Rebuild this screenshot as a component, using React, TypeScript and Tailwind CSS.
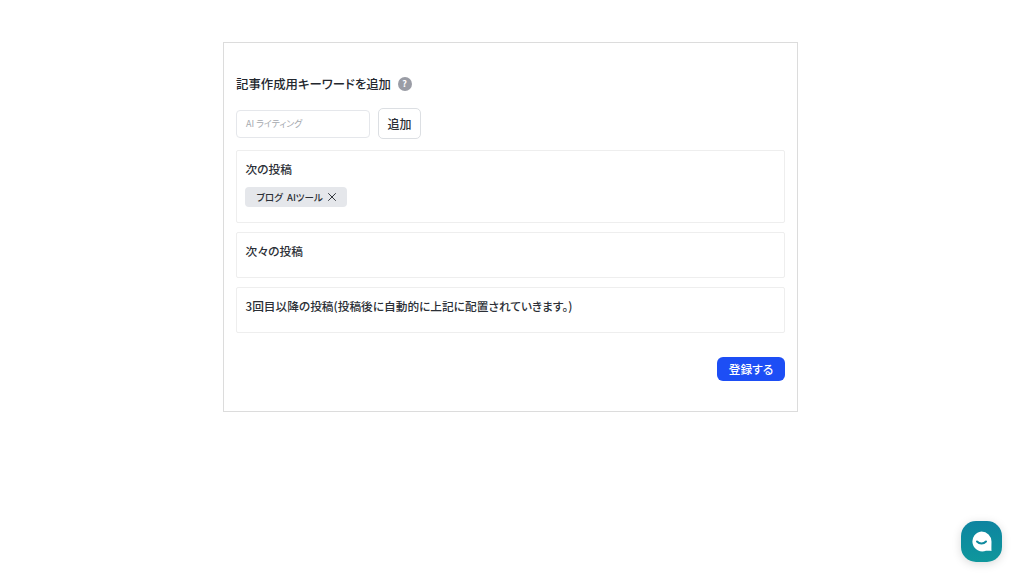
import React from "react";
import { X } from "lucide-react";

const font = { fontFamily: '"Noto Sans CJK JP", "Noto Sans", sans-serif' };

function Section({ title, className, children }: { title: string; className: string; children?: React.ReactNode }) {
  return (
    <div className={`border border-[#eeeeee] rounded-[2px] px-[8.500px] pt-[9px] ${className}`}>
      <div className="text-[11.700px] leading-[18px] font-medium text-[#2b2f36]">{title}</div>
      {children}
    </div>
  );
}

export default function App() {
  return (
    <div className="relative w-[1020px] h-[574px] bg-white overflow-hidden [font-feature-settings:'palt']" style={font}>
      <div className="ml-[223px] pt-[42px] w-[575px]">
        <div className="h-[370px] border border-[#dcdcdc] px-[12px] pt-[31px] flex flex-col">
          <div className="flex items-center h-[20px] gap-[6.500px]">
            <span className="text-[12.400px] leading-[20px] font-medium text-[#23272e]">記事作成用キーワードを追加</span>
            <span className="w-[14px] h-[14px] rounded-full bg-[#9a9ca5] text-white text-[9px] leading-[14px] font-bold text-center">?</span>
          </div>
          <div className="flex items-center gap-[8px] mt-[14px]">
            <div className="w-[134px] h-[28px] border border-[#e5e7eb] rounded-[4px] px-[9px] flex items-center text-[9px] text-[#a4a8ae]">AI ライティング</div>
            <div className="w-[43px] h-[31px] border border-[#dcdfe3] rounded-[5px] flex items-center justify-center text-[12px] font-medium text-[#2b2f36]">追加</div>
          </div>
          <Section title="次の投稿" className="h-[73px] mt-[11px]">
            <div className="mt-[9px] -ml-[0.5px] w-[102px] h-[20px] bg-[#e5e7eb] rounded-[4px] pl-[11.500px] flex items-center gap-[2px] text-[9.500px] font-medium text-[#2b2f36]">
              <span className="whitespace-pre">ブログ  AIツール</span>
              <X size={14} strokeWidth={1.7} className="text-[#33373d]" />
            </div>
          </Section>
          <Section title="次々の投稿" className="h-[46px] mt-[9px]" />
          <Section title="3回目以降の投稿(投稿後に自動的に上記に配置されていきます。)" className="h-[46px] mt-[9px]" />
          <div className="flex justify-end mt-[24px]">
            <div className="w-[68px] h-[24px] bg-[#1d4ef5] rounded-[6px] text-white text-[11.700px] font-medium flex items-center justify-center">登録する</div>
          </div>
        </div>
      </div>
      <div className="absolute left-[961px] top-[521px] w-[41px] h-[41px] rounded-[15px] bg-linear-to-b from-[#0e84a0] to-[#0f979c] shadow-[0_2px_10px_rgba(0,0,0,0.15)] flex items-center justify-center">
        <svg width="25" height="25" viewBox="0 0 25 25">
          <path d="M12.5 2.5a10 10 0 0 1 10 10c0 3-.2 7.5 0 9.5-2-.5-4-.3-5.500-.2A10 10 0 1 1 12.5 2.500z" fill="#fff" />
          <path d="M8 12.500c2.500 2.500 6.500 2.500 9 0" fill="none" stroke="#0f8a9f" strokeWidth="2" strokeLinecap="round" />
        </svg>
      </div>
    </div>
  );
}
